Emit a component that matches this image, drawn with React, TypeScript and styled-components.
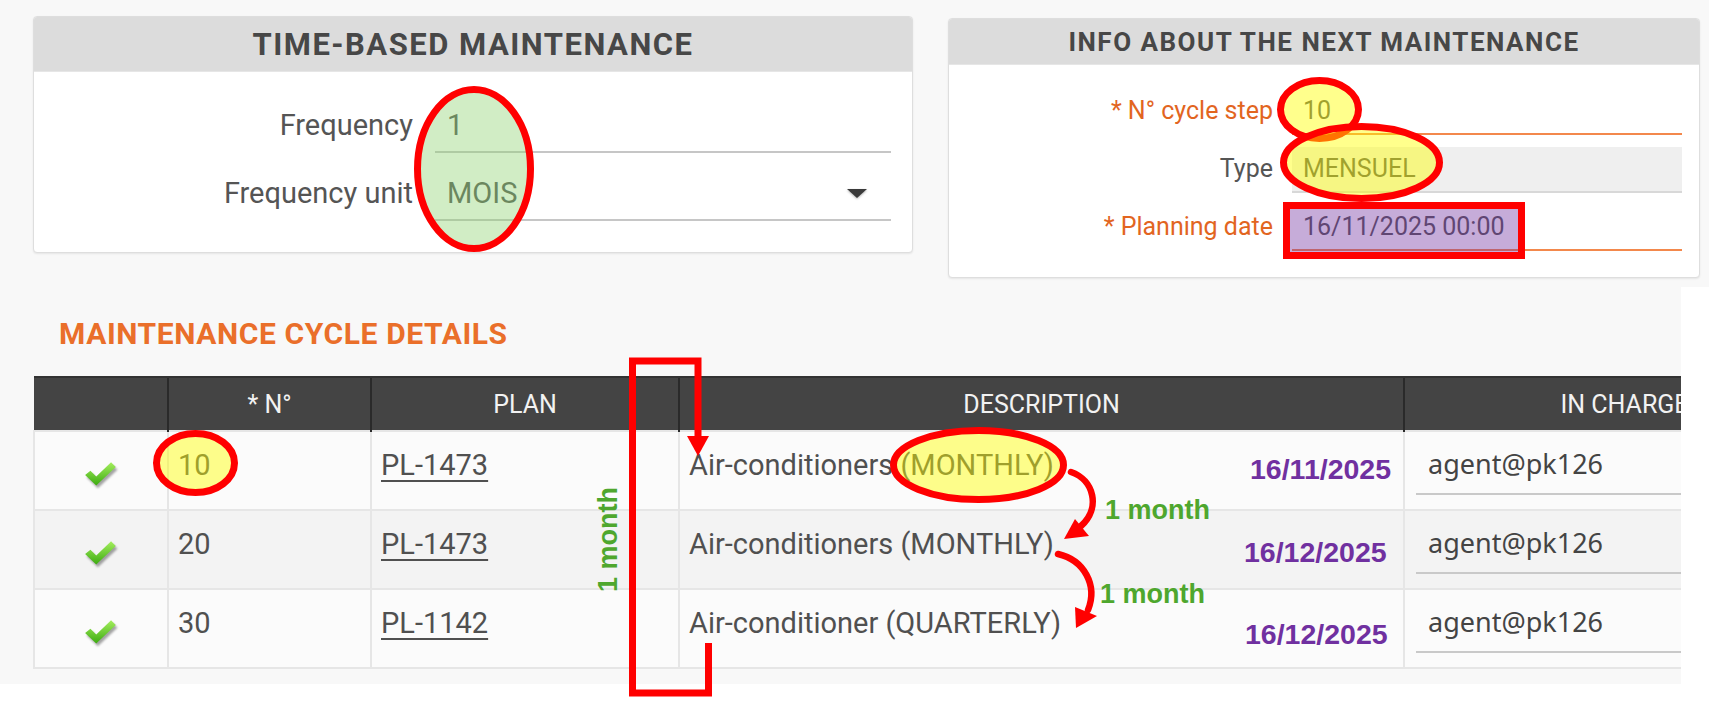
import React from "react";
import styled, { createGlobalStyle } from "styled-components";

const GlobalStyle = createGlobalStyle`
  html, body { margin: 0; padding: 0; background: #ffffff; }
  body { font-family: Roboto, "Liberation Sans", sans-serif; }
`;

const Page = styled.div`
  position: relative;
  width: 1709px;
  height: 703px;
  overflow: hidden;
  background: #ffffff;
`;

const TopBand = styled.div`
  display: flex;
  align-items: flex-start;
  gap: 35px;
  height: 287px;
  box-sizing: border-box;
  padding: 16px 0 0 33px;
  background: #f8f8f8;
`;

const Panel = styled.section<{ $width: number; $offset?: number }>`
  width: ${(p) => p.$width}px;
  margin-top: ${(p) => p.$offset ?? 0}px;
  box-sizing: border-box;
  background: #ffffff;
  border: 1px solid #dedede;
  border-radius: 4px;
  box-shadow: 0 1px 2px rgba(0, 0, 0, 0.08);
  overflow: hidden;
`;

const PanelHeader = styled.header<{ $height: number; $size: number; $spacing: number }>`
  height: ${(p) => p.$height}px;
  display: flex;
  align-items: center;
  justify-content: center;
  background: #dcdcdc;
  border-bottom: 1px solid #e6e6e6;
  color: #474747;
  font-weight: 700;
  font-size: ${(p) => p.$size}px;
  letter-spacing: ${(p) => p.$spacing}px;
`;

const FormGrid = styled.div<{ $label: number; $gap: number; $rowGap: number; $pad: string }>`
  display: grid;
  grid-template-columns: ${(p) => p.$label}px 1fr;
  column-gap: ${(p) => p.$gap}px;
  row-gap: ${(p) => p.$rowGap}px;
  align-items: baseline;
  padding: ${(p) => p.$pad};
`;

const Label = styled.label<{ $size: number; $required?: boolean }>`
  text-align: right;
  font-size: ${(p) => p.$size}px;
  color: ${(p) => (p.$required ? "#e2651f" : "#555555")};
  white-space: nowrap;
`;

const Field = styled.div<{ $size: number; $lh: number; $pad: string; $line: string; $bg?: string }>`
  display: flex;
  align-items: center;
  justify-content: space-between;
  font-size: ${(p) => p.$size}px;
  line-height: ${(p) => p.$lh}px;
  padding: ${(p) => p.$pad};
  border-bottom: 2px solid ${(p) => p.$line};
  background: ${(p) => p.$bg ?? "transparent"};
  color: #555555;
`;

const Caret = styled.span`
  width: 0;
  height: 0;
  margin-right: 24px;
  border-left: 10px solid transparent;
  border-right: 10px solid transparent;
  border-top: 9px solid #3a3a3a;
  filter: drop-shadow(0 1px 1px rgba(0, 0, 0, 0.3));
`;

const BottomArea = styled.div`
  width: 1681px;
  height: 397px;
  box-sizing: border-box;
  padding: 30px 0 0 33px;
  background: #f8f8f8;
`;

const SectionTitle = styled.h2`
  margin: 0 0 25px 26px;
  font-size: 30px;
  line-height: 34px;
  font-weight: 700;
  letter-spacing: 0.6px;
  color: #ea6f2a;
`;

const TableClip = styled.div`
  width: 1648px;
  overflow: hidden;
`;

const Table = styled.table`
  table-layout: fixed;
  width: 1810px;
  border-collapse: collapse;
`;

const Col = styled.col<{ $w: number }>`
  width: ${(p) => p.$w}px;
`;

const Th = styled.th`
  height: 52px;
  padding: 0;
  background: #444444;
  color: #f2f2f2;
  font-size: 25px;
  font-weight: 400;
  text-align: center;
  border-left: 2px solid #2a2a2a;
  border-top: 2px solid #333333;
  &:first-child { border-left: none; }
`;

const Row = styled.tr`
  height: 79px;
  background: #fbfbfb;
  &:nth-child(even) { background: #f3f3f3; }
`;

const Td = styled.td`
  vertical-align: top;
  padding: 16px 0 0 9px;
  border: 2px solid #e6e6e6;
  font-size: 29px;
  line-height: 34px;
  color: #505050;
  white-space: nowrap;
`;

const CheckCell = styled(Td)`
  padding: 29px 0 0 0;
  & > svg { display: block; margin: 0 auto; }
`;

const PlanLink = styled.a`
  color: #505050;
  text-decoration: underline;
  text-underline-offset: 5px;
  text-decoration-thickness: 2px;
`;

const AgentCell = styled(Td)`
  padding: 15px 0 0 11px;
`;

const AgentField = styled.div`
  font-family: "Noto Sans", "DejaVu Sans", sans-serif;
  font-size: 27px;
  line-height: 34px;
  padding: 0 0 12px 12px;
  border-bottom: 2px solid #c9c9c9;
  color: #444444;
`;

const Overlay = styled.svg`
  position: absolute;
  top: 0;
  left: 0;
  pointer-events: none;
`;

const Check = () => (
  <svg width="36" height="30" viewBox="0 0 34 28">
    <defs>
      <linearGradient id="chkFill" x1="0" y1="0" x2="0" y2="1">
        <stop offset="0" stopColor="#a4ee5e" />
        <stop offset="1" stopColor="#3cab10" />
      </linearGradient>
      <filter id="chkShadow" x="-20%" y="-20%" width="140%" height="140%">
        <feGaussianBlur stdDeviation="1.2" />
      </filter>
    </defs>
    <path d="M2 13 L7 9 L12.5 14.5 L26.5 1 L31 5.5 L12.5 23 Z" fill="rgba(0,0,0,0.35)" transform="translate(1.5 2.5)" filter="url(#chkShadow)" />
    <path d="M2 13 L7 9 L12.5 14.5 L26.5 1 L31 5.5 L12.5 23 Z" fill="url(#chkFill)" />
  </svg>
);

const rows = [
  { n: "10", plan: "PL-1473", desc: "Air-conditioners (MONTHLY)" },
  { n: "20", plan: "PL-1473", desc: "Air-conditioners (MONTHLY)" },
  { n: "30", plan: "PL-1142", desc: "Air-conditioner (QUARTERLY)" },
];

const RED = "#ff0000";
const YELLOW = "rgba(255, 255, 0, 0.45)";
const noteFont = "'Liberation Sans', Arial, sans-serif";

const Annotations = () => (
  <Overlay width="1709" height="703" viewBox="0 0 1709 703">
    <ellipse cx="474" cy="169" rx="56.5" ry="79.5" fill="rgba(140, 210, 110, 0.4)" stroke={RED} strokeWidth="7" />
    <ellipse cx="1319.5" cy="109.5" rx="39" ry="29" fill={YELLOW} stroke={RED} strokeWidth="7" />
    <ellipse cx="1361.5" cy="162.5" rx="78" ry="36" fill={YELLOW} stroke={RED} strokeWidth="7" />
    <rect x="1286.5" y="205.5" width="235" height="50" fill="rgba(112, 48, 160, 0.4)" stroke={RED} strokeWidth="7" />
    <ellipse cx="195.5" cy="463" rx="39" ry="29.5" fill={YELLOW} stroke={RED} strokeWidth="7" />
    <ellipse cx="978.5" cy="465" rx="85" ry="34.5" fill={YELLOW} stroke={RED} strokeWidth="7" />

    <path d="M698 438 L698 361 L632.5 361 L632.5 693 L708.5 693 L708.5 643" fill="none" stroke={RED} strokeWidth="7" strokeLinejoin="miter" />
    <polygon points="687,436 709,436 698,456" fill={RED} />

    <path d="M1071 472 C1094 480 1101 508 1081 526" fill="none" stroke={RED} strokeWidth="6.5" strokeLinecap="round" />
    <polygon points="1064,539 1075,519 1089,536" fill={RED} />
    <path d="M1058 554 C1084 560 1098 585 1088 610" fill="none" stroke={RED} strokeWidth="6.5" strokeLinecap="round" />
    <polygon points="1076,628 1075,607 1097,616" fill={RED} />

    <g fontFamily={noteFont} fontWeight="700" fontSize="27" fill="#4ea72e">
      <text x="1105" y="519">1 month</text>
      <text x="1100" y="603">1 month</text>
      <text transform="translate(617 592) rotate(-90)">1 month</text>
    </g>
    <g fontFamily={noteFont} fontWeight="700" fontSize="28.5" fill="#7030a0">
      <text x="1250" y="479">16/11/2025</text>
      <text x="1244" y="562">16/12/2025</text>
      <text x="1245" y="644">16/12/2025</text>
    </g>
  </Overlay>
);

export default function App() {
  return (
    <Page>
      <GlobalStyle />
      <TopBand>
        <Panel $width={880}>
          <PanelHeader $height={54} $size={31} $spacing={1.5}>TIME-BASED MAINTENANCE</PanelHeader>
          <FormGrid $label={379} $gap={22} $rowGap={16} $pad="29px 21px 31px 0">
            <Label $size={29}>Frequency</Label>
            <Field $size={29} $lh={34} $pad="7px 0 9px 12px" $line="#c6c6c6">1</Field>
            <Label $size={29}>Frequency unit</Label>
            <Field $size={29} $lh={34} $pad="7px 0 9px 12px" $line="#c6c6c6">
              MOIS
              <Caret />
            </Field>
          </FormGrid>
        </Panel>
        <Panel $width={752} $offset={2}>
          <PanelHeader $height={45} $size={26} $spacing={1.5}>INFO ABOUT THE NEXT MAINTENANCE</PanelHeader>
          <FormGrid $label={324} $gap={19} $rowGap={12} $pad="24px 17px 26px 0">
            <Label $size={25} $required>* N° cycle step</Label>
            <Field $size={25} $lh={30} $pad="7px 11px" $line="#f3884c">10</Field>
            <Label $size={25}>Type</Label>
            <Field $size={25} $lh={30} $pad="7px 11px" $line="#d8d8d8" $bg="#efefef">MENSUEL</Field>
            <Label $size={25} $required>* Planning date</Label>
            <Field $size={25} $lh={30} $pad="7px 11px" $line="#f3884c">16/11/2025 00:00</Field>
          </FormGrid>
        </Panel>
      </TopBand>

      <BottomArea>
        <SectionTitle>MAINTENANCE CYCLE DETAILS</SectionTitle>
        <TableClip>
          <Table>
            <colgroup>
              <Col $w={134} />
              <Col $w={203} />
              <Col $w={308} />
              <Col $w={725} />
              <Col $w={440} />
            </colgroup>
            <thead>
              <tr>
                <Th />
                <Th>* N°</Th>
                <Th>PLAN</Th>
                <Th>DESCRIPTION</Th>
                <Th>IN CHARGE</Th>
              </tr>
            </thead>
            <tbody>
              {rows.map((r) => (
                <Row key={r.n}>
                  <CheckCell>
                    <Check />
                  </CheckCell>
                  <Td>{r.n}</Td>
                  <Td>
                    <PlanLink>{r.plan}</PlanLink>
                  </Td>
                  <Td>{r.desc}</Td>
                  <AgentCell>
                    <AgentField>agent@pk126</AgentField>
                  </AgentCell>
                </Row>
              ))}
            </tbody>
          </Table>
        </TableClip>
      </BottomArea>

      <Annotations />
    </Page>
  );
}
